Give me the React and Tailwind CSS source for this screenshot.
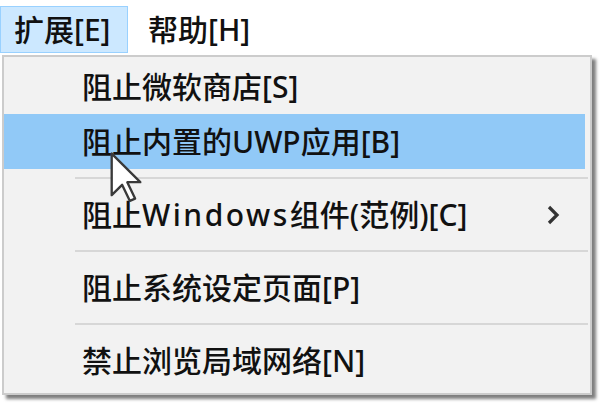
import React from "react";

const items = [
  { label: "阻止微软商店[S]" },
  { label: "阻止内置的UWP应用[B]", active: true },
  { sep: true },
  { label: <>阻止<span className="tracking-[2.5px]">Windows</span>组件(范例)[C]</>, sub: true },
  { sep: true },
  { label: "阻止系统设定页面[P]" },
  { sep: true },
  { label: "禁止浏览局域网络[N]" },
];

const Chevron = () => (
  <svg width="16" height="22" viewBox="0 0 16 22" className="ml-auto mr-[24px]">
    <polyline points="4,3 12,11 4,19" fill="none" stroke="#333" strokeWidth="3.2" />
  </svg>
);

const Cursor = () => (
  <svg
    width="34"
    height="52"
    viewBox="0 0 13 20"
    className="absolute left-[109px] top-[151px]"
  >
    <path
      d="M1,1 L1,17 L5,13 L8,19.2 L10,18.3 L7,12 L12,12 Z"
      fill="#ffffff"
      stroke="#3a3a3a"
      strokeWidth="0.9"
      strokeLinejoin="round"
    />
  </svg>
);

const App = () => {
  return (
    <div className="relative w-[600px] h-[403px] overflow-hidden bg-white text-[#111] text-[30px] font-medium leading-none font-['Noto_Sans','Noto_Sans_CJK_SC',sans-serif]">
      {/* menu bar */}
      <div className="flex h-[55px] items-start pt-[6px]">
        <div className="flex h-[47px] w-[128px] items-center border border-[#99d1ff] bg-[#cce8ff] pl-[13px]">
          扩展[E]
        </div>
        <div className="flex h-[47px] items-center pl-[20px]">帮助[H]</div>
      </div>

      {/* dropdown */}
      <div className="ml-[2px] w-[590px] border-2 border-[#cccccc] bg-[#f2f2f2] pt-[2px] pb-[5px] shadow-[4px_4px_3px_rgba(0,0,0,0.5)]">
        {items.map((it, i) =>
          it.sep ? (
            <div key={i} className="flex h-[18px] items-center">
              <div className="ml-[71px] mr-[2px] h-[2px] flex-1 bg-[#d7d7d7]" />
            </div>
          ) : (
            <div
              key={i}
              className={
                it.active
                  ? "mr-[5px] flex h-[55px] items-center bg-[#91c9f7] pl-[78px]"
                  : "mr-[5px] flex h-[55px] items-center pl-[78px]"
              }
            >
              <span>{it.label}</span>
              {it.sub && <Chevron />}
            </div>
          )
        )}
      </div>

      <Cursor />
    </div>
  );
};

export default App;
